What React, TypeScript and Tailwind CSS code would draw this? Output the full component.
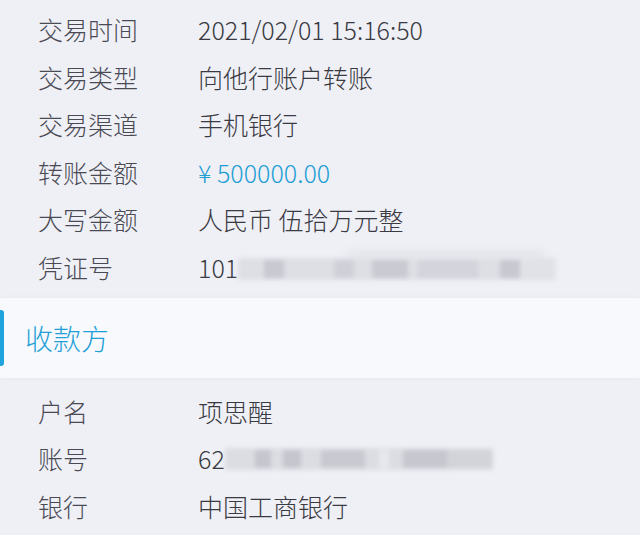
const Blur = ({ cells, bg }: { cells: [number, string][]; bg: string }) => (
  <div className={`flex items-center h-[22px] blur-[2px] ${bg}`}>
    {cells.map(([w, c], i) => (
      <div key={i} className={`h-[18px] ${c}`} style={{ width: w }} />
    ))}
  </div>
)

export default function App() {
  const top = [
    ['交易时间', '2021/02/01 15:16:50'],
    ['交易类型', '向他行账户转账'],
    ['交易渠道', '手机银行'],
    ['转账金额', '¥ 500000.00'],
    ['大写金额', '人民币 伍拾万元整'],
    ['凭证号', '101'],
  ]
  const bottom = [
    ['户名', '项思醒'],
    ['账号', '62'],
    ['银行', '中国工商银行'],
  ]

  return (
    <div
      className="w-[640px] h-[535px] overflow-hidden bg-[#eff0f6] text-[25px] font-light"
      style={{ fontFamily: '"Noto Sans CJK SC", "Noto Sans", sans-serif' }}
    >
      <div className="py-[6px]">
        {top.map(([k, v]) => (
          <div key={k} className="flex items-center h-[47.6px]">
            <div className="w-[198px] pl-[38px] text-[#4a4a54]">{k}</div>
            {k === '转账金额' ? (
              <div className="text-[#1f9fd4]">{v}</div>
            ) : k === '凭证号' ? (
              <div className="flex items-center text-[#3a3a42]">
                {v}
                <div className="flex flex-col mt-[-6px]">
                  <div className="ml-[108px] w-[200px] h-[8px] bg-[#e4e5eb] blur-[3px] rounded-t-[10px]" />
                  <Blur
                    bg="bg-[#dedfe5]"
                    cells={[
                      [26, ''],
                      [20, 'bg-[#c8c9d1]'],
                      [50, ''],
                      [20, 'bg-[#d0d1d8]'],
                      [18, ''],
                      [36, 'bg-[#cacbd2]'],
                      [10, ''],
                      [60, 'bg-[#d4d5dc]'],
                      [22, ''],
                      [20, 'bg-[#c7c8d0]'],
                      [36, 'bg-[#e1e2e8]'],
                    ]}
                  />
                </div>
              </div>
            ) : (
              <div className="text-[#3a3a42]">{v}</div>
            )}
          </div>
        ))}
      </div>

      <div className="flex items-center h-[80px] bg-[#f8f9fd] shadow-[0_0_6px_rgba(0,0,0,0.04)]">
        <div className="w-[4px] h-[56px] bg-[#1ea3dc] rounded-r-[3px]" />
        <div className="pl-[21px] text-[28px] text-[#1e9fd6]">收款方</div>
      </div>

      <div className="pt-[10px]">
        {bottom.map(([k, v]) => (
          <div key={k} className="flex items-center h-[47.5px]">
            <div className="w-[198px] pl-[38px] text-[#4a4a54]">{k}</div>
            {k === '账号' ? (
              <div className="flex items-center text-[#3a3a42]">
                {v}
                <Blur
                  bg="bg-[#dcdde3]"
                  cells={[
                    [30, ''],
                    [16, 'bg-[#c6c7ce]'],
                    [12, ''],
                    [18, 'bg-[#c6c7ce]'],
                    [20, ''],
                    [44, 'bg-[#c9cad1]'],
                    [14, ''],
                    [10, 'bg-[#e8e9ee]'],
                    [14, ''],
                    [44, 'bg-[#c7c8cf]'],
                    [46, 'bg-[#d3d4da]'],
                  ]}
                />
              </div>
            ) : (
              <div className="text-[#3a3a42]">{v}</div>
            )}
          </div>
        ))}
      </div>
    </div>
  )
}
